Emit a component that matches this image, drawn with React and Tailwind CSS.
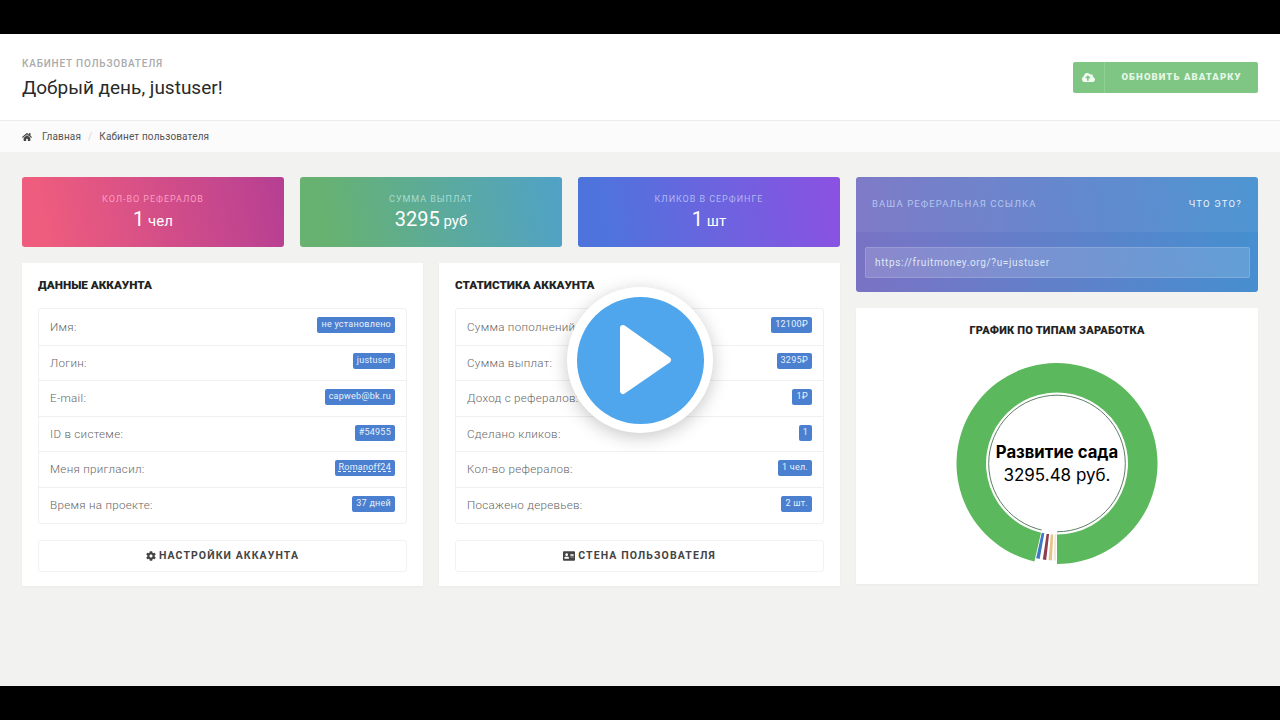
import React from 'react';
import { FaHome, FaCloudUploadAlt, FaCog, FaAddressCard } from 'react-icons/fa';

const font = { fontFamily: 'Roboto, "Noto Sans", sans-serif' };

const accountRows = [
  ['Имя:', 'не установлено'],
  ['Логин:', 'justuser'],
  ['E-mail:', 'capweb@bk.ru'],
  ['ID в системе:', '#54955'],
  ['Меня пригласил:', 'Romanoff24', true],
  ['Время на проекте:', '37 дней'],
];

const statRows = [
  ['Сумма пополнений:', '12100₽'],
  ['Сумма выплат:', '3295₽'],
  ['Доход с рефералов:', '1₽'],
  ['Сделано кликов:', '1'],
  ['Кол-во рефералов:', '1 чел.'],
  ['Посажено деревьев:', '2 шт.'],
];

// ring slice between two angles, 0 is the bottom of the ring, going clockwise
function slice(cx, cy, r1, r2, from, to) {
  const pt = (r, a) => {
    const rad = (a * Math.PI) / 180;
    return `${(cx - r * Math.sin(rad)).toFixed(2)} ${(cy + r * Math.cos(rad)).toFixed(2)}`;
  };
  const big = to - from > 180 ? 1 : 0;
  return `M${pt(r2, from)} A${r2} ${r2} 0 ${big} 1 ${pt(r2, to)} L${pt(r1, to)} A${r1} ${r1} 0 ${big} 0 ${pt(r1, from)} Z`;
}

function StatCard({ title, value, unit, gradient, titleColor }) {
  return (
    <div className={`h-[70px] rounded-[3px] flex flex-col items-center justify-center pt-[2px] ${gradient}`}>
      <div className={`text-[9px] tracking-[0.95px] uppercase leading-[14px] ${titleColor}`}>{title}</div>
      <div className="text-white leading-[26px]">
        <span className="text-[20px]">{value}</span>
        <span className="text-[15px]"> {unit}</span>
      </div>
    </div>
  );
}

function InfoPanel({ title, rows, icon, action }) {
  return (
    <div className="bg-white h-[323px] px-4 pt-[14px] shadow-[0_1px_2px_rgba(0,0,0,0.04)]">
      <h3 className="text-[11.7px] font-black text-[#222] leading-4 uppercase">{title}</h3>
      <div className="mt-[15px] border border-[#f0f0f0] rounded-[3px]">
        {rows.map(([label, value, dashed], i) => (
          <div
            key={label}
            className={`h-[35.6px] flex items-center justify-between pl-[11px] pr-[11px] ${i > 0 ? 'border-t border-[#f0f0f0]' : ''}`}
          >
            <span className="text-[11.6px] tracking-[0.3px] text-[#666] font-light mt-[1px]">{label}</span>
            <span
              className={`h-[16px] mb-[3px] px-1 rounded-[2px] bg-[#4a80cf] text-[#e8f0fb] text-[9px] tracking-[0.25px] leading-[15px] ${dashed ? 'underline decoration-dashed' : ''}`}
            >
              {value}
            </span>
          </div>
        ))}
      </div>
      <div className="mt-4 h-[32px] border border-[#f2f2f2] rounded-[3px] flex items-center justify-center gap-[3px] text-[#444] text-[10.5px] font-bold tracking-[1.1px] uppercase">
        {icon}
        <span>{action}</span>
      </div>
    </div>
  );
}

function Donut() {
  const cx = 101;
  const cy = 100.5;
  return (
    <svg width="202" height="202" viewBox="0 0 202 202" className="block">
      <circle cx={cx} cy={cy} r="68.3" fill="none" stroke="#5f7f64" strokeWidth="1" />
      <path d={slice(cx, cy, 71, 100.5, 13, 360)} fill="#5cb85c" />
      <path d={slice(cx, cy, 67, 72, 0, 13)} fill="#ffffff" />
      <path d={slice(cx, cy, 71, 97, 10.3, 12.4)} fill="#3f78c4" />
      <path d={slice(cx, cy, 71, 97, 6.4, 8.4)} fill="#8e3f4f" />
      <path d={slice(cx, cy, 71, 97, 3, 5)} fill="#e6c48c" />
      <path d={slice(cx, cy, 71, 97, 0.6, 2)} fill="#efe9d5" />
    </svg>
  );
}

export default function App() {
  return (
    <div className="h-screen flex flex-col relative overflow-hidden bg-black" style={font}>
      <div className="h-[34px] bg-black shrink-0" />

      <header className="h-[87px] shrink-0 bg-white border-b border-[#ececec] pl-[22px] pr-[22px] flex items-center justify-between">
        <div className="mt-[2px]">
          <div className="text-[10px] font-medium tracking-[0.8px] uppercase text-[#aaaaaa] leading-4">Кабинет пользователя</div>
          <h1 className="text-[19px] text-[#2a2a2a] leading-[26px] mt-[3px]">Добрый день, justuser!</h1>
        </div>
        <button className="w-[185px] h-[31px] mt-[1px] rounded-[2px] bg-[#7fc684] flex items-stretch text-[#e6f8e6]">
          <span className="w-[32px] flex items-center justify-center border-r border-[#90d094]">
            <FaCloudUploadAlt className="w-[13px] h-[13px] text-[#f2fbf2]" />
          </span>
          <span className="flex-1 flex items-center justify-center text-[9.5px] font-black tracking-[1.1px] uppercase">
            Обновить аватарку
          </span>
        </button>
      </header>

      <nav className="h-[31px] shrink-0 bg-[#fbfbfb] pl-[22px] flex items-center text-[10px] tracking-[0.15px] text-[#555]">
        <FaHome className="w-[10px] h-[10px] text-[#444]" />
        <span className="ml-[10px]">Главная</span>
        <span className="mx-[7px] text-[#d8d8d8]">/</span>
        <span>Кабинет пользователя</span>
      </nav>

      <main className="flex-1 bg-[#f2f2f0] px-[22px] pt-[25px] grid grid-cols-[818px_402px] gap-4 items-start">
        <div className="flex flex-col gap-4">
          <div className="grid grid-cols-3 gap-4">
            <StatCard
              title="Кол-во рефералов"
              value="1"
              unit="чел"
              gradient="bg-[linear-gradient(80deg,#ee5c7e_10%,#b63f93_100%)]"
              titleColor="text-[#ff9cc4]"
            />
            <StatCard
              title="Сумма выплат"
              value="3295"
              unit="руб"
              gradient="bg-[linear-gradient(80deg,#67b270_10%,#50a2c8_100%)]"
              titleColor="text-[#a8dcd0]"
            />
            <StatCard
              title="Кликов в серфинге"
              value="1"
              unit="шт"
              gradient="bg-[linear-gradient(80deg,#4e74dc_10%,#8c51e2_100%)]"
              titleColor="text-[#b0b8f4]"
            />
          </div>
          <div className="grid grid-cols-2 gap-4">
            <InfoPanel
              title="Данные аккаунта"
              rows={accountRows}
              action="Настройки аккаунта"
              icon={<FaCog className="w-[10px] h-[10px]" />}
            />
            <InfoPanel
              title="Статистика аккаунта"
              rows={statRows}
              action="Стена пользователя"
              icon={<FaAddressCard className="w-[12px] h-[12px]" />}
            />
          </div>
        </div>

        <div className="flex flex-col gap-4">
          <div className="h-[115px] rounded-[3px] bg-[linear-gradient(80deg,#7a72c4,#4490d0)] overflow-hidden flex flex-col">
            <div className="h-[55px] bg-white/5 flex items-center justify-between pl-4 pr-4">
              <span className="text-[9.5px] tracking-[1.1px] uppercase text-[#b4c6ee]">Ваша реферальная ссылка</span>
              <span className="text-[9.5px] tracking-[1.2px] uppercase text-[#eaf4fc]">Что это?</span>
            </div>
            <div className="flex-1 pl-[9px] pr-2 pt-[15px]">
              <div className="h-[31px] rounded-[2px] bg-white/15 border border-white/15 pl-[9px] flex items-center text-[10px] tracking-[0.65px] text-[#dfe8f6]">
                https://fruitmoney.org/?u=justuser
              </div>
            </div>
          </div>

          <div className="h-[276px] bg-white shadow-[0_1px_2px_rgba(0,0,0,0.04)] flex flex-col items-center pt-[15px]">
            <h3 className="text-[11px] font-black text-[#222] leading-4 uppercase tracking-[0.2px]">График по типам заработка</h3>
            <div className="relative mt-[24px]">
              <Donut />
              <div className="absolute inset-0 flex flex-col items-center justify-center" style={{ fontFamily: 'Inter, sans-serif' }}>
                <div className="text-[16.7px] font-bold text-black leading-[23px]">Развитие сада</div>
                <div className="text-[17px] text-black leading-[23px]">3295.48 руб.</div>
              </div>
            </div>
          </div>
        </div>
      </main>

      <div className="h-[34px] bg-black shrink-0" />

      <div className="absolute left-[567px] top-[287px] w-[146px] h-[146px] rounded-full bg-white shadow-[0_4px_18px_rgba(0,0,0,0.22)] flex items-center justify-center">
        <svg width="127" height="127" viewBox="0 0 127 127" className="block">
          <circle cx="63.5" cy="63.5" r="63.5" fill="#4fa6ec" />
          <path d="M46 31 L91 63 L46 94 Z" fill="#ffffff" stroke="#ffffff" strokeWidth="6" strokeLinejoin="round" />
        </svg>
      </div>
    </div>
  );
}
